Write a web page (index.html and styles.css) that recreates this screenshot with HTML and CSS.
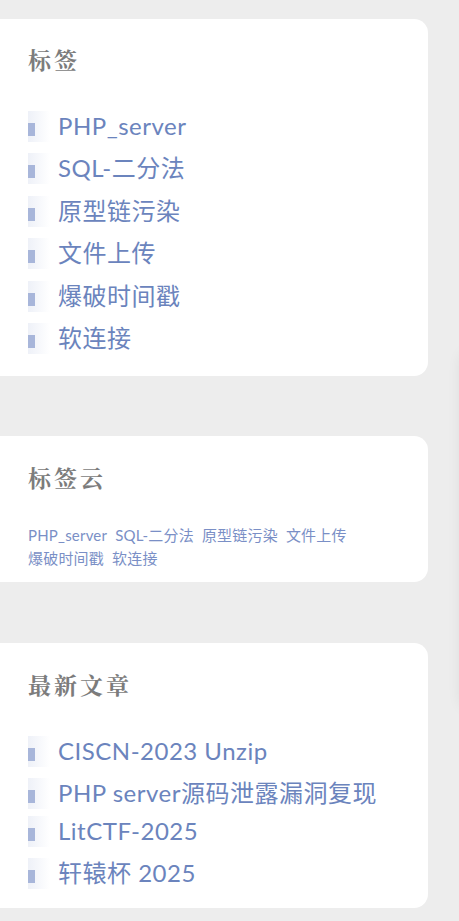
FILE: index.html
```html
<!DOCTYPE html>
<html lang="zh-CN">
<head>
<meta charset="utf-8">
<link rel="stylesheet" href="styles.css">
</head>
<body>
<div class="side-shadow"></div>
<div class="column">
  <section class="card card-tags">
    <h3 class="card-title">标签</h3>
    <ul class="list">
      <li class="item">PHP_server</li>
      <li class="item">SQL-二分法</li>
      <li class="item">原型链污染</li>
      <li class="item">文件上传</li>
      <li class="item">爆破时间戳</li>
      <li class="item">软连接</li>
    </ul>
  </section>
  <section class="card card-cloud">
    <h3 class="card-title">标签云</h3>
    <div class="cloud">
      <span>PHP_server</span>
      <span>SQL-二分法</span>
      <span>原型链污染</span>
      <span>文件上传</span>
      <span>爆破时间戳</span>
      <span>软连接</span>
    </div>
  </section>
  <section class="card card-posts">
    <h3 class="card-title">最新文章</h3>
    <ul class="list">
      <li class="item">CISCN-2023 Unzip</li>
      <li class="item">PHP server源码泄露漏洞复现</li>
      <li class="item">LitCTF-2025</li>
      <li class="item">轩辕杯 2025</li>
    </ul>
  </section>
</div>
</body>
</html>
```
FILE: styles.css
```css
html, body {
  margin: 0;
  padding: 0;
  background: #ededed;
  overflow: hidden;
}
body {
  width: 459px;
  height: 921px;
  position: relative;
}
.side-shadow {
  position: absolute;
  left: 460px;
  top: 350px;
  width: 200px;
  height: 360px;
  border-radius: 14px;
  background: #ededed;
  box-shadow: 0 0 14px rgba(0, 0, 0, 0.07);
}
.column {
  display: flex;
  flex-direction: column;
  gap: 60px;
  padding-top: 19px;
  margin-left: -14px;
  width: 442px;
}
.card {
  background: #fff;
  border-radius: 14px;
  padding: 0 0 0 42px;
  box-sizing: border-box;
}
.card-title {
  margin: 0;
  font-family: "Noto Serif CJK SC", "Noto Sans CJK SC", serif;
  font-weight: 700;
  font-size: 23px;
  letter-spacing: 3px;
  color: #7c7c7c;
  line-height: 30px;
}
.card-tags { height: 357px; padding-top: 26px; }
.card-cloud { height: 146px; padding-top: 27px; }
.card-posts { height: 265px; padding-top: 27px; margin-top: 1px; }
.list {
  list-style: none;
  margin: 0;
  padding: 0;
  display: flex;
  flex-direction: column;
}
.card-tags .list { margin-top: 36px; }
.card-posts .list { margin-top: 36px; }
.item {
  position: relative;
  padding-left: 30px;
  height: 42px;
  line-height: 30px;
  font-family: "Lato", "Noto Sans CJK SC", sans-serif;
  font-size: 24px;
  letter-spacing: 0.5px;
  color: #6b84bd;
  white-space: nowrap;
}
.card-tags .item:nth-child(2n) { height: 43px; }
.card-posts .item:nth-child(2) { height: 38px; }
.item::before {
  content: "";
  position: absolute;
  left: 0;
  top: 0;
  width: 22px;
  height: 31px;
  background: linear-gradient(to right, #eef1f8, rgba(255,255,255,0));
}
.item::after {
  content: "";
  position: absolute;
  left: 0;
  top: 12px;
  width: 7px;
  height: 13px;
  background: #a8b6da;
}
.cloud {
  margin-top: 31px;
  width: 340px;
  display: flex;
  flex-wrap: wrap;
  column-gap: 8px;
  row-gap: 0;
  font-family: "Lato", "Noto Sans CJK SC", sans-serif;
  font-size: 15px;
  letter-spacing: 0.2px;
  line-height: 23px;
  color: #7a8fc6;
}
```
